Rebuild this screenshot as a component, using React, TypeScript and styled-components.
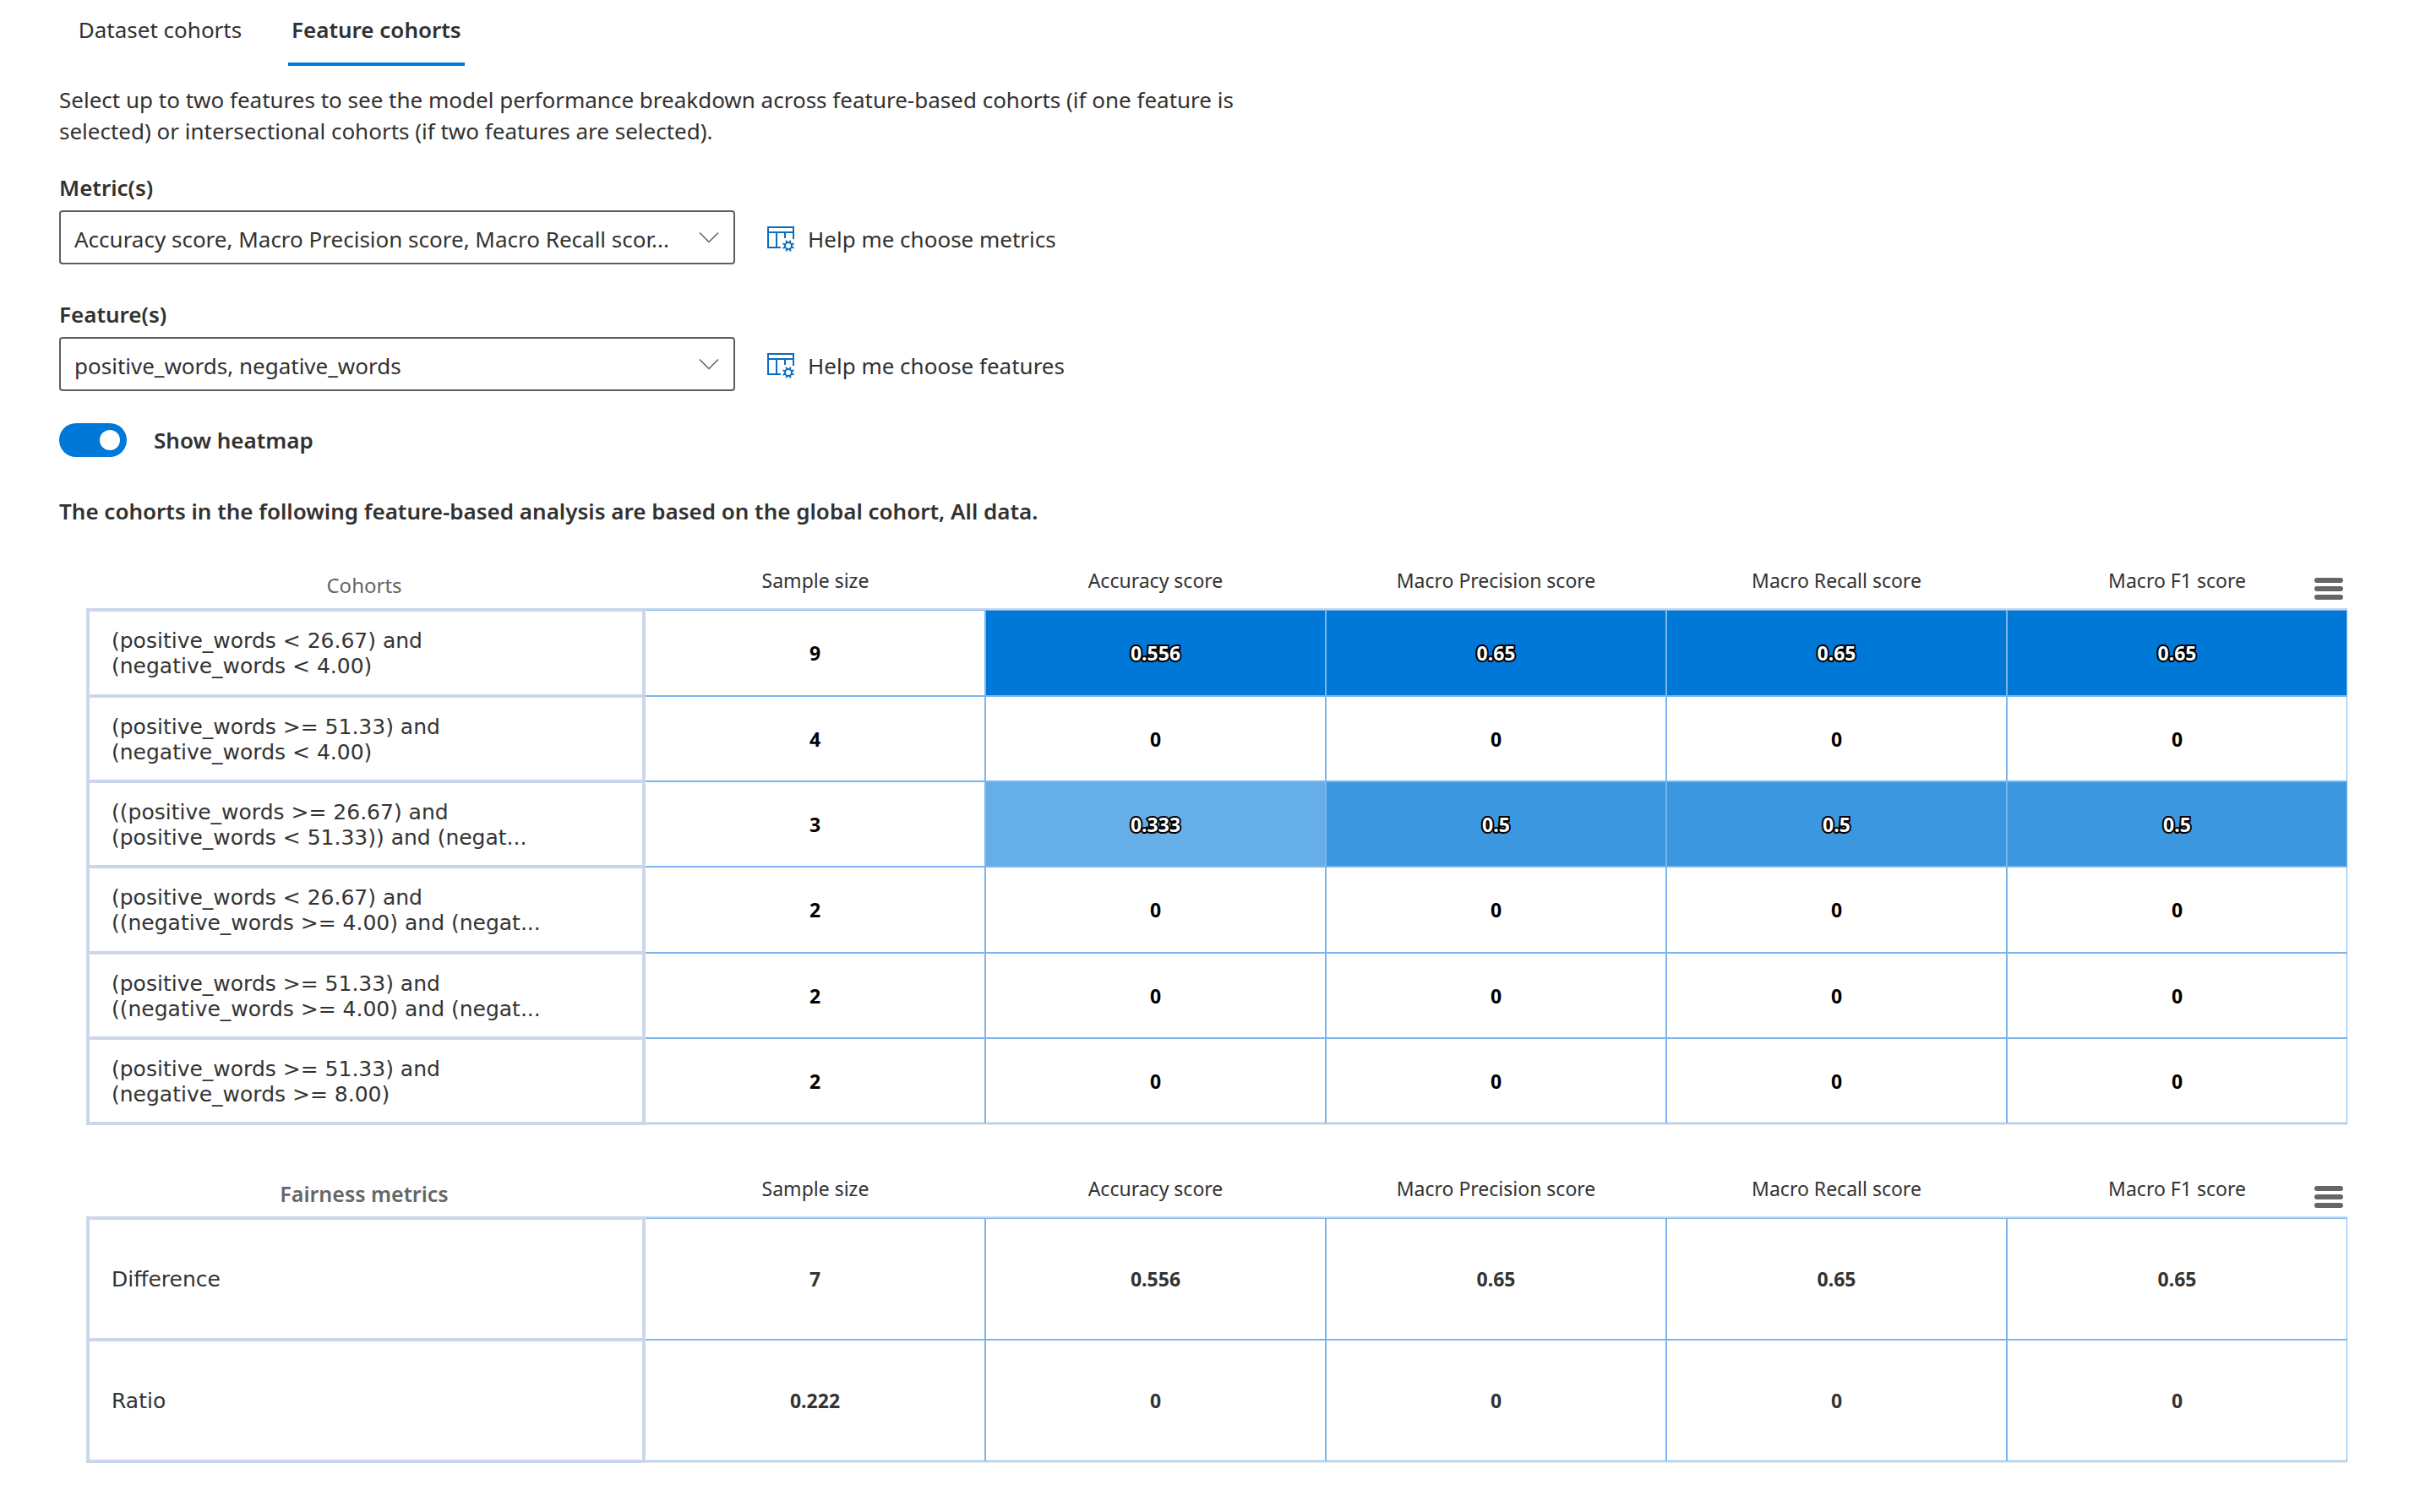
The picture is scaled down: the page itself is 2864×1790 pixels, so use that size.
import React, { useState } from 'react';
import styled, { createGlobalStyle } from 'styled-components';

const BLUE: [number, number, number] = [0, 120, 215];

const GlobalStyle = createGlobalStyle`
  *, *::before, *::after { box-sizing: border-box; }
  body {
    margin: 0;
    background: #fff;
    color: #323130;
    font-family: 'Noto Sans', 'Open Sans', sans-serif;
    font-size: 26px;
    line-height: 36px;
  }
  button, select { font: inherit; color: inherit; }
`;

const Page = styled.main`
  padding: 0 86px 58px 70px;
`;

const Tabs = styled.div`
  display: flex;
  gap: 48px;
  padding-left: 16px;
`;

const Tab = styled.button<{ $active?: boolean }>`
  min-width: 207px;
  padding: 17px 4px;
  border: 0;
  border-bottom: 4px solid ${(p) => (p.$active ? '#0078d7' : 'transparent')};
  background: none;
  height: 78px;
  font-weight: ${(p) => (p.$active ? 600 : 400)};
  line-height: 36px;
  display: flex;
  justify-content: center;
  align-items: flex-start;
  white-space: nowrap;
  cursor: pointer;
`;

const Description = styled.p`
  max-width: 1420px;
  margin: 22px 0 30px;
  line-height: 37px;
`;

const Fields = styled.div`
  display: grid;
  gap: 41px;
  margin-bottom: 38px;
`;

const Field = styled.div`
  min-width: 0;
`;

const FieldLabel = styled.label`
  display: block;
  margin-bottom: 9px;
  font-weight: 600;
`;

const FieldRow = styled.div`
  display: flex;
  align-items: center;
  gap: 38px;
`;

const SelectBox = styled.div`
  position: relative;
  flex: 0 1 800px;
  min-width: 0;
`;

const Select = styled.select`
  display: block;
  appearance: none;
  width: 100%;
  height: 64px;
  padding: 4px 64px 0 16px;
  border: 2px solid #605e5c;
  border-radius: 4px;
  background: #fff;
  text-overflow: ellipsis;
`;

const Caret = styled.svg`
  position: absolute;
  top: 25px;
  right: 19px;
  width: 24px;
  height: 14px;
  pointer-events: none;
`;

const HelpButton = styled.button`
  display: flex;
  align-items: center;
  gap: 16px;
  padding: 4px 0 0;
  border: 0;
  background: none;
  white-space: nowrap;
  cursor: pointer;
`;

const ToggleRow = styled.div`
  display: flex;
  align-items: center;
  gap: 32px;
  margin-bottom: 46px;
  font-weight: 600;
`;

const Toggle = styled.input`
  appearance: none;
  display: flex;
  align-items: center;
  justify-content: flex-start;
  width: 80px;
  height: 40px;
  margin: 0;
  padding: 0 8px;
  border-radius: 20px;
  background: #605e5c;
  cursor: pointer;

  &::before {
    content: '';
    width: 24px;
    height: 24px;
    border-radius: 50%;
    background: #fff;
  }

  &:checked {
    justify-content: flex-end;
    background: #0078d7;
  }
`;

const Note = styled.p`
  margin: 0 0 17px;
  font-weight: 600;
`;

const ChartSection = styled.section`
  position: relative;
  padding: 0 0 30px 32px;
`;

const MenuButton = styled.button`
  position: absolute;
  top: 44px;
  right: 5px;
  display: flex;
  flex-direction: column;
  gap: 4px;
  width: 34px;
  padding: 0;
  border: 0;
  background: none;
  cursor: pointer;
`;

const MenuBar = styled.span`
  height: 6px;
  border-radius: 3px;
  background: #666;
`;

const Table = styled.table`
  width: 100%;
  table-layout: fixed;
  border-collapse: separate;
  border-spacing: 0;
`;

const ColumnHead = styled.th`
  height: 82px;
  padding: 0 0 18px;
  border-bottom: 2px solid #ccd6eb;
  color: #333;
  font-size: 23px;
  font-weight: 400;
  line-height: 30px;
  vertical-align: bottom;

  &:nth-child(2) {
    width: 402px;
  }
`;

const CornerHead = styled(ColumnHead)<{ $bold?: boolean }>`
  width: 662px;
  padding: 0 4px 12px 0;
  color: #666;
  font-size: ${(p) => (p.$bold ? 25 : 24)}px;
  font-weight: ${(p) => (p.$bold ? 600 : 400)};
`;

const Row = styled.tr<{ $tall?: boolean }>`
  height: ${(p) => (p.$tall ? 144 : 101)}px;

  &:nth-child(3n + 1) {
    height: ${(p) => (p.$tall ? 144 : 102)}px;
  }
`;

const RowHead = styled.th`
  padding: 2px 24px 0 26px;
  border: solid #ccd6eb;
  border-width: 2px 4px;
  color: #333;
  font-family: 'DejaVu Sans', sans-serif;
  font-size: 25px;
  font-weight: 400;
  line-height: 30px;
  text-align: left;
  white-space: pre-line;

  ${Row}:last-child > & {
    box-shadow: 0 2px #ccd6eb;
  }
`;

const Cell = styled.td<{ $fill?: string; $heat?: boolean }>`
  padding: 0;
  border: 1px solid #7cb5ec;
  background: ${(p) => p.$fill ?? '#fff'};
  color: ${(p) => (p.$fill ? '#fff' : p.$heat ? '#000' : '#333')};
  font-size: 23px;
  font-weight: 700;
  line-height: 30px;
  text-align: center;
  -webkit-text-stroke: ${(p) => (p.$fill ? '4px #000' : '0')};
  paint-order: stroke fill;

  &:nth-child(2) {
    border-left: 0;
  }

  ${Row}:last-child > & {
    box-shadow: 0 2px #e6e6e6;
  }
`;

function TableGearIcon() {
  return (
    <svg width="32" height="32" viewBox="0 0 32 32" fill="none" stroke="#0f6cbd" strokeWidth="2" aria-hidden="true">
      <path d="M16 26H1V2h30v14M1 8h30M11 8v18M21 8v7" />
      <circle cx="25" cy="24" r="4" />
      <g>
        {[0, 45, 90, 135, 180, 225, 270, 315].map((a) => (
          <path key={a} d="M25 20v-3" transform={`rotate(${a + 22} 25 24)`} />
        ))}
      </g>
    </svg>
  );
}

function DropdownField(props: { id: string; label: string; value: string; help: string }) {
  return (
    <Field>
      <FieldLabel htmlFor={props.id}>{props.label}</FieldLabel>
      <FieldRow>
        <SelectBox>
          <Select id={props.id}>
            <option>{props.value}</option>
          </Select>
          <Caret viewBox="0 0 24 14" fill="none" stroke="#605e5c" strokeWidth="1.5" aria-hidden="true">
            <path d="M1 1.5l11 11 11-11" />
          </Caret>
        </SelectBox>
        <HelpButton type="button">
          <TableGearIcon />
          {props.help}
        </HelpButton>
      </FieldRow>
    </Field>
  );
}

const columns = ['Sample size', 'Accuracy score', 'Macro Precision score', 'Macro Recall score', 'Macro F1 score'];

type DataRow = { name: string; values: number[] };

const cohorts: DataRow[] = [
  { name: '(positive_words < 26.67) and\n(negative_words < 4.00)', values: [9, 0.556, 0.65, 0.65, 0.65] },
  { name: '(positive_words >= 51.33) and\n(negative_words < 4.00)', values: [4, 0, 0, 0, 0] },
  { name: '((positive_words >= 26.67) and\n(positive_words < 51.33)) and (negat...', values: [3, 0.333, 0.5, 0.5, 0.5] },
  { name: '(positive_words < 26.67) and\n((negative_words >= 4.00) and (negat...', values: [2, 0, 0, 0, 0] },
  { name: '(positive_words >= 51.33) and\n((negative_words >= 4.00) and (negat...', values: [2, 0, 0, 0, 0] },
  { name: '(positive_words >= 51.33) and\n(negative_words >= 8.00)', values: [2, 0, 0, 0, 0] },
];

const fairness: DataRow[] = [
  { name: 'Difference', values: [7, 0.556, 0.65, 0.65, 0.65] },
  { name: 'Ratio', values: [0.222, 0, 0, 0, 0] },
];

/** Colour of a metric value, from white at 0 to full blue at the column's maximum. */
function heatColor(rows: DataRow[], value: number, column: number): string | undefined {
  if (column === 0 || value === 0) return undefined;
  const max = Math.max(...rows.map((r) => r.values[column]));
  const channels = BLUE.map((c) => Math.round(255 + (c - 255) * (value / max)));
  return `rgb(${channels.join(', ')})`;
}

function MetricTable(props: { title: string; rows: DataRow[]; heat?: boolean; fairness?: boolean }) {
  const { title, rows, heat, fairness: tall } = props;
  return (
    <ChartSection>
      <Table>
        <thead>
          <tr>
            <CornerHead scope="col" $bold={tall}>{title}</CornerHead>
            {columns.map((c) => (
              <ColumnHead scope="col" key={c}>{c}</ColumnHead>
            ))}
          </tr>
        </thead>
        <tbody>
          {rows.map((row) => (
            <Row key={row.name} $tall={tall}>
              <RowHead scope="row">{row.name}</RowHead>
              {row.values.map((v, i) => (
                <Cell key={columns[i]} $heat={!tall} $fill={heat ? heatColor(rows, v, i) : undefined}>
                  {v}
                </Cell>
              ))}
            </Row>
          ))}
        </tbody>
      </Table>
      <MenuButton type="button" aria-label="Chart menu">
        <MenuBar />
        <MenuBar />
        <MenuBar />
      </MenuButton>
    </ChartSection>
  );
}

export default function App() {
  const [heatmap, setHeatmap] = useState(true);
  return (
    <>
      <GlobalStyle />
      <Page>
        <Tabs role="tablist">
          <Tab role="tab" aria-selected={false}>Dataset cohorts</Tab>
          <Tab role="tab" aria-selected $active>Feature cohorts</Tab>
        </Tabs>
        <Description>
          Select up to two features to see the model performance breakdown across feature-based cohorts (if one
          feature is selected) or intersectional cohorts (if two features are selected).
        </Description>
        <Fields>
          <DropdownField
            id="metrics"
            label="Metric(s)"
            value="Accuracy score, Macro Precision score, Macro Recall scor..."
            help="Help me choose metrics"
          />
          <DropdownField
            id="features"
            label="Feature(s)"
            value="positive_words, negative_words"
            help="Help me choose features"
          />
        </Fields>
        <ToggleRow>
          <Toggle
            id="heatmap"
            type="checkbox"
            role="switch"
            checked={heatmap}
            onChange={(e) => setHeatmap(e.target.checked)}
          />
          <label htmlFor="heatmap">Show heatmap</label>
        </ToggleRow>
        <Note>The cohorts in the following feature-based analysis are based on the global cohort, All data.</Note>
        <MetricTable title="Cohorts" rows={cohorts} heat={heatmap} />
        <MetricTable title="Fairness metrics" rows={fairness} fairness />
      </Page>
    </>
  );
}
